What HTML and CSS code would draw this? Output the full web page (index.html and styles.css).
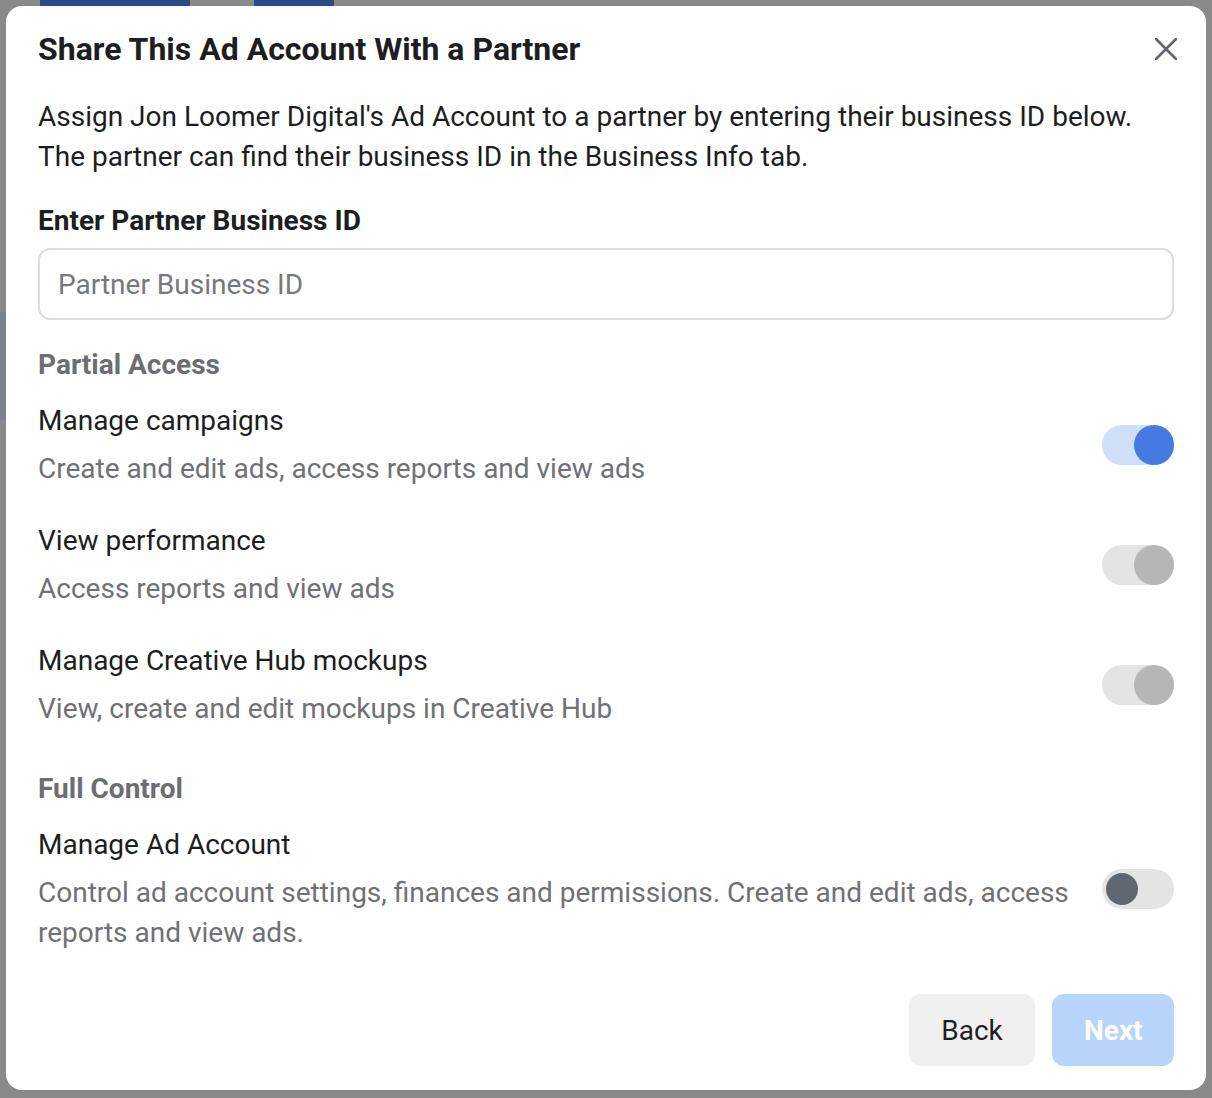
FILE: index.html
```html
<!DOCTYPE html>
<html lang="en">
<head>
<meta charset="utf-8">
<title>Share This Ad Account With a Partner</title>
<link rel="stylesheet" href="styles.css">
</head>
<body>
<div class="backdrop">
  <div class="bg-btn bg-btn-add"></div>
  <div class="bg-btn bg-btn-icon"></div>
  <div class="bg-strip"></div>
</div>
<div class="dialog" role="dialog">
  <div class="header">
    <h1 class="title">Share This Ad Account With a Partner</h1>
    <button class="close" aria-label="Close">
      <svg width="22" height="22" viewBox="0 0 22 22"><path d="M1 1L21 21M21 1L1 21" stroke="#606770" stroke-width="2.6" stroke-linecap="round" fill="none"/></svg>
    </button>
  </div>
  <p class="intro">Assign Jon Loomer Digital's Ad Account to a partner by entering their business ID below.<br>The partner can find their business ID in the Business Info tab.</p>
  <div class="label">Enter Partner Business ID</div>
  <div class="input"><span class="placeholder">Partner Business ID</span></div>

  <div class="section">Partial Access</div>
  <div class="perm">
    <div class="perm-text">
      <div class="perm-name">Manage campaigns</div>
      <div class="perm-desc">Create and edit ads, access reports and view ads</div>
    </div>
    <div class="toggle on"><span class="knob"></span></div>
  </div>
  <div class="perm">
    <div class="perm-text">
      <div class="perm-name">View performance</div>
      <div class="perm-desc">Access reports and view ads</div>
    </div>
    <div class="toggle disabled"><span class="knob"></span></div>
  </div>
  <div class="perm">
    <div class="perm-text">
      <div class="perm-name">Manage Creative Hub mockups</div>
      <div class="perm-desc">View, create and edit mockups in Creative Hub</div>
    </div>
    <div class="toggle disabled"><span class="knob"></span></div>
  </div>

  <div class="section section-full">Full Control</div>
  <div class="perm">
    <div class="perm-text">
      <div class="perm-name">Manage Ad Account</div>
      <div class="perm-desc">Control ad account settings, finances and permissions. Create and edit ads, access reports and view ads.</div>
    </div>
    <div class="toggle off"><span class="knob"></span></div>
  </div>

  <div class="footer">
    <button class="btn btn-back">Back</button>
    <button class="btn btn-next">Next</button>
  </div>
</div>
</body>
</html>
```
FILE: styles.css
```css
html, body {
  margin: 0;
  padding: 0;
}
body {
  background: #8a8a8a;
  font-family: Roboto, "Liberation Sans", Arial, sans-serif;
  color: #1c1e21;
  padding: 6px;
  width: 1200px;
  height: 1086px;
  position: relative;
}
.backdrop {
  position: absolute;
  inset: 0;
  pointer-events: none;
}
.bg-btn {
  position: absolute;
  top: 0;
  height: 8px;
  background: #2b4b85;
  border-radius: 0 0 3px 3px;
}
.bg-btn-add { left: 40px; width: 150px; }
.bg-btn-icon { left: 254px; width: 80px; }
.bg-strip {
  position: absolute;
  left: 0;
  top: 312px;
  width: 6px;
  height: 108px;
  background: #7d8290;
}
.dialog {
  position: relative;
  background: #fff;
  border-radius: 16px;
  box-sizing: border-box;
  width: 1200px;
  height: 1084px;
  padding: 24px 32px 24px 32px;
  display: flex;
  flex-direction: column;
}
.header {
  display: flex;
  align-items: center;
  justify-content: space-between;
  height: 40px;
  margin-top: -1px;
}
.title {
  margin: 0;
  font-size: 32px;
  font-weight: 700;
  color: #1c1e21;
}
.close {
  border: 0;
  background: none;
  padding: 0;
  margin-right: -3px;
  width: 22px;
  height: 22px;
  display: flex;
}
.intro {
  margin: 28px 0 0;
  font-size: 28px;
  line-height: 40px;
  color: #1c1e21;
}
.label {
  margin-top: 26px;
  font-size: 28px;
  font-weight: 700;
  line-height: 36px;
}
.input {
  margin-top: 9px;
  height: 72px;
  box-sizing: border-box;
  border: 2px solid #dadde1;
  border-radius: 12px;
  display: flex;
  align-items: center;
  padding-left: 18px;
}
.placeholder {
  font-size: 28px;
  color: #76787b;
}
.section {
  margin-top: 27px;
  font-size: 28px;
  font-weight: 700;
  line-height: 36px;
  color: #6c6e71;
}
.section-full { margin-top: 42px; }
.perm {
  display: flex;
  align-items: center;
  justify-content: space-between;
  margin-top: 18px;
}
.perm + .perm { margin-top: 32px; }
.perm-text {
  display: flex;
  flex-direction: column;
  gap: 8px;
}
.perm-name {
  font-size: 28px;
  line-height: 40px;
  color: #1c1e21;
}
.perm-desc {
  font-size: 28px;
  line-height: 40px;
  color: #6f7174;
  max-width: 1040px;
}
.toggle {
  flex: none;
  width: 72px;
  height: 40px;
  border-radius: 20px;
  position: relative;
  background: #e4e4e4;
}
.toggle .knob {
  position: absolute;
  border-radius: 50%;
}
.toggle.on { background: #cfdef9; }
.toggle.on .knob {
  right: 0; top: 0; width: 40px; height: 40px;
  background: #4679e1;
}
.toggle.disabled .knob {
  right: 0; top: 0; width: 40px; height: 40px;
  background: #b6b6b6;
}
.toggle.off .knob {
  left: 4px; top: 4px; width: 32px; height: 32px;
  background: #606770;
}
.footer {
  margin-top: auto;
  display: flex;
  justify-content: flex-end;
  gap: 17px;
}
.btn {
  border: 0;
  height: 72px;
  border-radius: 12px;
  font-family: inherit;
  font-size: 28px;
  padding: 0 32px;
}
.btn-back {
  background: #f0f0f0;
  color: #1c1e21;
  width: 126px;
}
.btn-next {
  background: #b8d4fa;
  color: #fff;
  font-weight: 700;
  width: 122px;
}
```
